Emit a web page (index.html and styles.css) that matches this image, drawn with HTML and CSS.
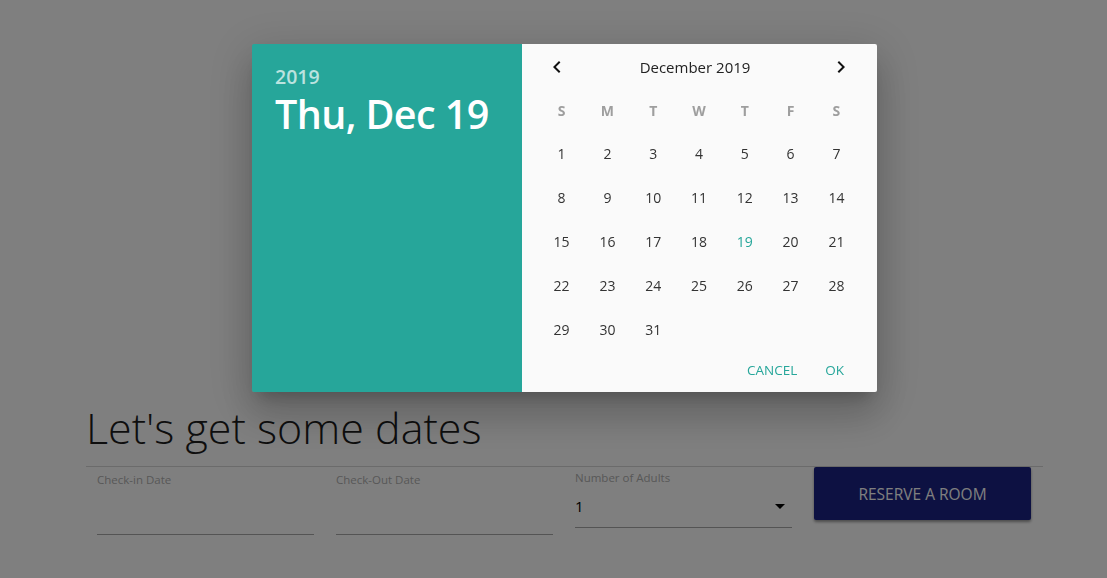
FILE: index.html
```html
<!DOCTYPE html>
<html>
<head>
<meta charset="utf-8">
<link rel="stylesheet" href="styles.css">
</head>
<body>
<main class="page">
  <h1 class="title">Let's get some dates</h1>
  <div class="form-row">
    <div class="field">
      <label class="field-label">Check-in Date</label>
      <div class="field-input"></div>
    </div>
    <div class="field">
      <label class="field-label">Check-Out Date</label>
      <div class="field-input"></div>
    </div>
    <div class="field field-select">
      <label class="field-label">Number of Adults</label>
      <div class="field-input select-input"><span>1</span><span class="caret"></span></div>
    </div>
    <button class="reserve">RESERVE A ROOM</button>
  </div>
</main>

<div class="overlay">
  <div class="dialog">
    <div class="dialog-head">
      <div class="head-year">2019</div>
      <div class="head-date">Thu, Dec 19</div>
    </div>
    <div class="dialog-body">
      <div class="cal-nav">
        <button class="nav-btn" aria-label="Previous month">
          <svg viewBox="0 0 24 24" width="24" height="24"><path d="M15.41 7.41L14 6l-6 6 6 6 1.41-1.41L10.83 12z" fill="#111"/></svg>
        </button>
        <div class="month">December 2019</div>
        <button class="nav-btn" aria-label="Next month">
          <svg viewBox="0 0 24 24" width="24" height="24"><path d="M10 6L8.59 7.41 13.17 12l-4.58 4.59L10 18l6-6z" fill="#111"/></svg>
        </button>
      </div>
      <div class="cal-grid">
        <div class="dow">S</div><div class="dow">M</div><div class="dow">T</div><div class="dow">W</div><div class="dow">T</div><div class="dow">F</div><div class="dow">S</div>
        <div class="day">1</div><div class="day">2</div><div class="day">3</div><div class="day">4</div><div class="day">5</div><div class="day">6</div><div class="day">7</div>
        <div class="day">8</div><div class="day">9</div><div class="day">10</div><div class="day">11</div><div class="day">12</div><div class="day">13</div><div class="day">14</div>
        <div class="day">15</div><div class="day">16</div><div class="day">17</div><div class="day">18</div><div class="day today">19</div><div class="day">20</div><div class="day">21</div>
        <div class="day">22</div><div class="day">23</div><div class="day">24</div><div class="day">25</div><div class="day">26</div><div class="day">27</div><div class="day">28</div>
        <div class="day">29</div><div class="day">30</div><div class="day">31</div>
      </div>
      <div class="actions">
        <button class="act">CANCEL</button>
        <button class="act">OK</button>
      </div>
    </div>
  </div>
</div>
</body>
</html>
```

FILE: styles.css
```css
* { box-sizing: border-box; }
html, body { margin: 0; padding: 0; }
body {
  background: #ffffff;
  font-family: "Open Sans", "Noto Sans", sans-serif;
  width: 1107px;
  height: 578px;
  overflow: hidden;
}
.page {
  padding: 400px 64px 0 86px;
}
.title {
  margin: 0;
  height: 66px;
  font-size: 43px;
  font-weight: 300;
  line-height: 56px;
  color: #1c1c1c;
  letter-spacing: 0;
}
.form-row {
  display: flex;
  align-items: flex-start;
  border-top: 1px solid #d6d6d6;
  padding-left: 11px;
  gap: 22px;
  width: 957px;
}
.field {
  width: 217px;
  padding-top: 6px;
}
.field-label {
  display: block;
  font-size: 11.5px;
  line-height: 14px;
  color: #b0b0b0;
}
.field-input {
  height: 48px;
  border-bottom: 1px solid #a8a8a8;
}
.field-select { padding-top: 4px; }
.select-input {
  height: 43px;
  display: flex;
  align-items: center;
  justify-content: space-between;
  font-size: 15px;
  color: #000;
  padding-top: 0;
}
.caret {
  width: 0;
  height: 0;
  border-left: 5px solid transparent;
  border-right: 5px solid transparent;
  border-top: 5px solid #000;
  margin-right: 7px;
}
.reserve {
  width: 217px;
  height: 53px;
  border: none;
  border-radius: 2px;
  background: #1a2284;
  color: #ffffff;
  font-family: inherit;
  font-size: 15.5px;
  box-shadow: 0 2px 3px rgba(0,0,0,0.4);
}

.overlay {
  position: fixed;
  inset: 0;
  background: rgba(0,0,0,0.5);
}
.dialog {
  position: absolute;
  left: 252px;
  top: 44px;
  width: 625px;
  height: 348px;
  display: flex;
  box-shadow: 0 11px 15px -7px rgba(0,0,0,0.2), 0 24px 38px 3px rgba(0,0,0,0.14), 0 9px 46px 8px rgba(0,0,0,0.12);
  border-radius: 2px;
  overflow: hidden;
}
.dialog-head {
  width: 270px;
  background: #26a69a;
  padding: 20px 0 0 23px;
  color: #fff;
}
.head-year {
  font-size: 19.5px;
  font-weight: 600;
  line-height: 26px;
  color: rgba(255,255,255,0.7);
}
.head-date {
  margin-top: 4px;
  font-size: 39.5px;
  font-weight: 600;
  line-height: 40px;
  letter-spacing: -0.6px;
}
.dialog-body {
  flex: 1;
  background: #fafafa;
  display: flex;
  flex-direction: column;
}
.cal-nav {
  height: 46px;
  display: flex;
  align-items: center;
  justify-content: space-between;
  padding: 0 24px 0 23px;
}
.nav-btn {
  width: 24px;
  height: 24px;
  padding: 0;
  border: none;
  background: transparent;
  display: flex;
}
.month {
  font-size: 15px;
  color: #222;
  margin-right: 8px;
}
.cal-grid {
  display: grid;
  grid-template-columns: repeat(7, 45.8px);
  grid-template-rows: 41px repeat(5, 44px);
  justify-content: center;
  padding-right: 1px;
}
.dow, .day {
  display: flex;
  align-items: center;
  justify-content: center;
  font-size: 14px;
}
.dow {
  font-weight: 700;
  color: #9e9e9e;
}
.day { color: #333; }
.day.today { color: #26a69a; }
.actions {
  flex: 1;
  display: flex;
  justify-content: flex-end;
  align-items: center;
  padding: 0 25px 4px 0;
  gap: 12px;
}
.act {
  border: none;
  background: transparent;
  color: #26a69a;
  font-family: inherit;
  font-size: 13.5px;
  padding: 4px 8px;
}
```
